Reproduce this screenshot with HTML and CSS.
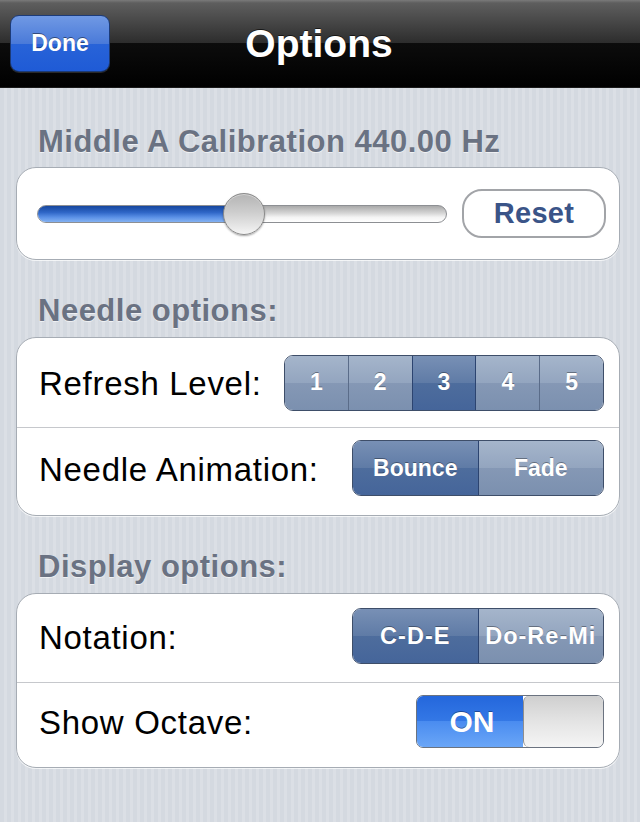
FILE: index.html
```
<!DOCTYPE html>
<html>
<head>
<meta charset="utf-8">
<link rel="stylesheet" href="styles.css">
</head>
<body>
<header class="navbar">
  <div class="nav-left"><button class="done-btn">Done</button></div>
  <h1 class="nav-title">Options</h1>
  <div class="nav-right"></div>
</header>
<main class="content">
  <section class="group group-first">
    <h2 class="group-title">Middle A Calibration 440.00 Hz</h2>
    <div class="card">
      <div class="row row-slider">
        <div class="slider">
          <div class="track">
            <div class="track-fill" style="width: 50.5%"></div>
          </div>
          <div class="thumb" style="left: 50.5%"></div>
        </div>
        <button class="reset-btn">Reset</button>
      </div>
    </div>
  </section>
  <section class="group">
    <h2 class="group-title">Needle options:</h2>
    <div class="card">
      <div class="row">
        <span class="row-label">Refresh Level:</span>
        <div class="segmented seg-wide">
          <span class="seg">1</span>
          <span class="seg">2</span>
          <span class="seg seg-on">3</span>
          <span class="seg">4</span>
          <span class="seg">5</span>
        </div>
      </div>
      <div class="row row-last">
        <span class="row-label">Needle Animation:</span>
        <div class="segmented seg-pair">
          <span class="seg seg-on">Bounce</span>
          <span class="seg">Fade</span>
        </div>
      </div>
    </div>
  </section>
  <section class="group">
    <h2 class="group-title">Display options:</h2>
    <div class="card card-compact">
      <div class="row">
        <span class="row-label">Notation:</span>
        <div class="segmented seg-pair seg-spaced">
          <span class="seg seg-on">C-D-E</span>
          <span class="seg">Do-Re-Mi</span>
        </div>
      </div>
      <div class="row row-last">
        <span class="row-label">Show Octave:</span>
        <div class="switch">
          <span class="switch-on">ON</span>
          <span class="switch-knob"></span>
        </div>
      </div>
    </div>
  </section>
</main>
</body>
</html>
```
FILE: styles.css
```
* { box-sizing: border-box; }
html, body { margin: 0; padding: 0; }
body {
  width: 640px;
  height: 822px;
  overflow: hidden;
  font-family: "Liberation Sans", Arial, sans-serif;
  background: repeating-linear-gradient(90deg, #d4d9e0 0 4px, #dbdfe5 4px 7px);
}
.navbar {
  height: 88px;
  display: grid;
  grid-template-columns: 1fr auto 1fr;
  align-items: center;
  padding: 0 10px;
  background: linear-gradient(#7a7a7a 0, #5e5e5e 3px, #474747 25%, #2c2c2c 50%, #0c0c0c 50%, #000 100%);
  border-bottom: 1px solid #1a1a1a;
}
.done-btn {
  width: 100px;
  height: 57px;
  border: 1px solid #1c3b78;
  border-radius: 9px;
  background: linear-gradient(#7099e4 0%, #4a7ad9 50%, #2863d8 50%, #1f5bd6 100%);
  color: #fff;
  font-family: "Liberation Sans", Arial, sans-serif;
  font-weight: bold;
  font-size: 23px;
  text-shadow: 0 -1px 0 rgba(0,0,0,0.45);
  box-shadow: 0 1px 0 rgba(255,255,255,0.15);
  padding: 0;
}
.nav-title {
  margin: 0;
  color: #fff;
  font-size: 39px;
  font-weight: bold;
  text-shadow: 0 -1px 0 rgba(0,0,0,0.6);
  position: relative;
  left: -1px;
}
.content {
  padding: 0 20px 0 16px;
}
.group { margin-top: 33px; }
.group-first { margin-top: 36px; }
.group-title {
  margin: 0 0 8px 22px;
  font-size: 31px;
  line-height: 36px;
  font-weight: bold;
  letter-spacing: 0.5px;
  color: #6a7282;
  text-shadow: 0 1px 0 rgba(255,255,255,0.6);
}
.group-first .group-title { margin-bottom: 7px; }
.card {
  background: #fff;
  border: 1px solid #a6acb4;
  border-radius: 20px;
  box-shadow: 0 1px 0 rgba(255,255,255,0.7);
}
.row {
  height: 90px;
  display: flex;
  align-items: center;
  justify-content: space-between;
  padding: 0 15px 0 22px;
  border-bottom: 1px solid #c6c8cc;
}
.row-last { border-bottom: none; height: 87px; padding-bottom: 7px; }
.card-compact .row { height: 89px; padding-bottom: 4px; }
.card-compact .row-last { height: 84px; padding-bottom: 7px; }
.row-slider {
  height: 91px;
  border-bottom: none;
  padding: 0 13px 0 20px;
}
.row-label {
  font-size: 33px;
  letter-spacing: 0.7px;
  color: #000;
  padding-top: 3px;
}
.slider {
  position: relative;
  flex: 1;
  height: 44px;
  display: flex;
  align-items: center;
}
.track {
  width: 100%;
  height: 18px;
  border-radius: 9px;
  border: 1px solid #8d8f93;
  background: linear-gradient(#a9a9a9 0%, #d6d6d6 45%, #f4f4f4 70%, #fff 100%);
  overflow: hidden;
}
.track-fill {
  height: 100%;
  background: linear-gradient(#16479e 0%, #2f66c7 40%, #5a90e6 70%, #84b2f2 100%);
}
.thumb {
  position: absolute;
  top: 1px;
  width: 42px;
  height: 42px;
  margin-left: -21px;
  border-radius: 50%;
  border: 1px solid #8a8a8a;
  background: linear-gradient(#b4b4b4 0%, #cdcdcd 45%, #e6e6e6 80%, #f5f5f5 100%);
  box-shadow: 0 1px 2px rgba(0,0,0,0.35), inset 0 1px 0 rgba(255,255,255,0.4);
}
.reset-btn {
  margin-left: 15px;
  width: 144px;
  height: 49px;
  border: 2px solid #a2a4a8;
  border-radius: 20px;
  background: #fff;
  color: #3a5488;
  font-family: "Liberation Sans", Arial, sans-serif;
  font-weight: bold;
  font-size: 29px;
  letter-spacing: 0.3px;
  padding: 0;
}
.segmented {
  display: flex;
  height: 56px;
  border: 1px solid #3e4e69;
  border-radius: 9px;
  overflow: hidden;
}
.seg-wide { width: 320px; }
.seg-pair { width: 252px; }
.seg {
  flex: 1;
  display: flex;
  align-items: center;
  justify-content: center;
  color: #fff;
  font-weight: bold;
  font-size: 23px;
  text-shadow: 0 -1px 0 rgba(0,0,0,0.35);
  background: linear-gradient(#a5b5cb 0%, #93a5bf 50%, #8598b5 50%, #7b90af 100%);
  border-left: 1px solid #5a6c89;
}
.seg:first-child { border-left: none; }
.seg-on {
  background: linear-gradient(#7890b5 0%, #5f7ba6 50%, #4e6d9d 50%, #45659a 100%);
  border-left-color: #2c4470;
}
.seg-on + .seg { border-left-color: #2c4470; }
.seg-spaced .seg { font-size: 23.5px; letter-spacing: 1px; }
.switch {
  width: 188px;
  height: 53px;
  display: flex;
  border: 1px solid #6b7380;
  border-radius: 7px;
  overflow: hidden;
}
.switch-on {
  flex: 1;
  display: flex;
  align-items: center;
  justify-content: center;
  padding-left: 4px;
  color: #fff;
  font-weight: bold;
  font-size: 30px;
  text-shadow: 0 -1px 0 rgba(0,0,0,0.35);
  background: linear-gradient(#2467dc 0%, #3478e6 50%, #4a8cf0 50%, #6aa6f7 100%);
}
.switch-knob {
  width: 80px;
  border-left: 1px solid #8e8e8e;
  border-radius: 6px;
  background: linear-gradient(#cfcfcf 0%, #e4e4e4 50%, #f5f5f5 100%);
}
```
